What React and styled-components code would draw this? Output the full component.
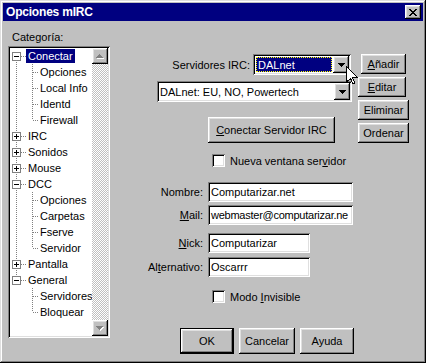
import React from "react";
import styled, { createGlobalStyle, css } from "styled-components";

const GlobalStyle = createGlobalStyle`
  html, body {
    margin: 0;
    padding: 0;
    background: #c0c0c0;
  }
`;

const raised = css`
  box-shadow: inset -1px -1px #000, inset 1px 1px #fff, inset -2px -2px #808080,
    inset 2px 2px #dfdfdf;
`;

const sunken = css`
  box-shadow: inset 1px 1px #808080, inset -1px -1px #fff, inset 2px 2px #000,
    inset -2px -2px #dfdfdf;
`;

const Window = styled.div`
  position: relative;
  width: 426px;
  height: 363px;
  box-sizing: border-box;
  padding: 3px;
  background: #c0c0c0;
  box-shadow: inset -1px -1px #000, inset 1px 1px #dfdfdf, inset -2px -2px #808080,
    inset 2px 2px #fff;
  display: flex;
  flex-direction: column;
  font: 11px "Liberation Sans", Arial, sans-serif;
  color: #000;
`;

const TitleBar = styled.div`
  height: 18px;
  flex-shrink: 0;
  background: #000080;
  display: flex;
  align-items: center;
  justify-content: space-between;
  padding: 0 2px 0 3px;
`;

const Title = styled.span`
  color: #fff;
  font-weight: bold;
  font-size: 12px;
  letter-spacing: -0.2px;
`;

const CloseButton = styled.div`
  width: 16px;
  height: 14px;
  background: #c0c0c0;
  display: flex;
  align-items: center;
  justify-content: center;
  ${raised};
`;

const Body = styled.div`
  flex: 1;
  display: flex;
  padding: 9px 0 0 5px;
`;

const CategoryPane = styled.div`
  width: 102px;
  display: flex;
  flex-direction: column;
`;

const PaneLabel = styled.div`
  height: 14px;
  line-height: 14px;
  margin-left: 4px;
`;

const TreeBox = styled.div`
  margin-top: 2px;
  height: 292px;
  box-sizing: border-box;
  padding: 2px;
  display: flex;
  background: #fff;
  ${sunken};
`;

const TreeList = styled.div`
  flex: 1;
  overflow: hidden;
  background: #fff;
`;

const TreeRow = styled.div`
  height: 16px;
  display: flex;
  align-items: center;
`;

const dotsV = "repeating-linear-gradient(to bottom, #808080 0 1px, transparent 1px 2px)";
const dotsH = "repeating-linear-gradient(to right, #808080 0 1px, transparent 1px 2px)";

const guideLayers = ({ $up, $down, $across }) => {
  const layers = [];
  if ($up) layers.push(`${dotsV} 6px 0 / 1px 8px no-repeat`);
  if ($down) layers.push(`${dotsV} 6px 8px / 1px 8px no-repeat`);
  if ($across) layers.push(`${dotsH} 7px 8px / ${$across}px 1px no-repeat`);
  return layers.length ? `background: ${layers.join(", ")};` : "";
};

const Guide = styled.span`
  width: ${(p) => p.$w}px;
  height: 16px;
  flex-shrink: 0;
  display: flex;
  align-items: center;
  ${guideLayers};

  svg {
    margin-left: 2px;
    display: block;
  }
`;

const TreeLabel = styled.span`
  height: 14px;
  line-height: 14px;
  padding: 0 2px;
  white-space: nowrap;
  background: ${(p) => (p.$selected ? "#000080" : "transparent")};
  color: ${(p) => (p.$selected ? "#fff" : "#000")};
`;

const ScrollBar = styled.div`
  width: 16px;
  display: flex;
  flex-direction: column;
`;

const ScrollButton = styled.div`
  width: 16px;
  height: 16px;
  flex-shrink: 0;
  background: #c0c0c0;
  ${raised};

  svg {
    display: block;
  }
`;

const ScrollTrack = styled.div`
  flex: 1;
  background: repeating-conic-gradient(#c0c0c0 0 25%, #fff 0 50%) 0 0 / 2px 2px;
`;

const SettingsPane = styled.div`
  flex: 1;
  display: flex;
  flex-direction: column;
  padding-top: 24px;
`;

const ServerArea = styled.div`
  display: flex;
`;

const ServerMain = styled.div`
  width: 248px;
  display: flex;
  flex-direction: column;
`;

const SideButtons = styled.div`
  display: flex;
  flex-direction: column;
  gap: 3px;
`;

const FieldRow = styled.div`
  display: flex;
  align-items: center;
  margin-top: ${(p) => p.$top || 0}px;
`;

const FieldLabel = styled.label`
  width: ${(p) => p.$w}px;
  margin-right: ${(p) => p.$gap}px;
  text-align: right;
  white-space: nowrap;
`;

const Combo = styled.div`
  box-sizing: border-box;
  width: ${(p) => p.$w}px;
  height: 21px;
  margin-left: ${(p) => p.$indent || 0}px;
  margin-top: ${(p) => p.$top || 0}px;
  padding: 2px;
  display: flex;
  background: #fff;
  ${sunken};
`;

const ComboValue = styled.div`
  flex: 1;
  display: flex;
  align-items: center;
  padding: ${(p) => (p.$focused ? "1px" : "0 0 0 1px")};
  white-space: nowrap;
  overflow: hidden;
`;

const Highlight = styled.div`
  flex: 1;
  align-self: stretch;
  display: flex;
  align-items: center;
  box-sizing: border-box;
  padding-left: 1px;
  background: #000080;
  color: #fff;
  border: 1px dotted #ffff00;
`;

const DropButton = styled.div`
  width: 16px;
  height: 17px;
  flex-shrink: 0;
  background: #c0c0c0;
  display: flex;
  align-items: center;
  justify-content: center;
  ${raised};
`;

const Button = styled.button`
  box-sizing: border-box;
  width: ${(p) => p.$w}px;
  height: ${(p) => p.$h || 20}px;
  margin-left: ${(p) => p.$indent || 0}px;
  margin-top: ${(p) => p.$top || 0}px;
  padding: 0;
  border: ${(p) => (p.$default ? "1px solid #000" : "none")};
  background: #c0c0c0;
  font: inherit;
  color: #000;
  white-space: nowrap;
  ${raised};
`;

const CheckRow = styled.label`
  display: flex;
  align-items: center;
  gap: 5px;
  margin-left: 102px;
  margin-top: ${(p) => p.$top}px;
  height: 13px;
`;

const CheckBox = styled.span`
  width: 13px;
  height: 13px;
  box-sizing: border-box;
  background: #fff;
  flex-shrink: 0;
  ${sunken};
`;

const TextField = styled.div`
  box-sizing: border-box;
  width: ${(p) => p.$w}px;
  height: 20px;
  padding: 2px 2px 2px 3px;
  display: flex;
  align-items: center;
  background: #fff;
  white-space: nowrap;
  overflow: hidden;
  letter-spacing: ${(p) => (p.$tight ? "-0.25px" : "normal")};
  ${sunken};
`;

const DialogButtons = styled.div`
  display: flex;
  gap: 5px;
  margin: 25px 0 0 70px;
`;

const Pointer = styled.svg`
  position: absolute;
  left: 346px;
  top: 66px;
`;

const triangleRows = (x, y, up, color) =>
  [0, 1, 2, 3].map((r) => {
    const row = up ? r : 3 - r;
    return <rect key={`${color}${r}`} x={x + 3 - row} y={y + r} width={row * 2 + 1} height={1} fill={color} />;
  });

const Arrow = ({ up, disabled }) => (
  <svg width="16" height="16" viewBox="0 0 16 16" shapeRendering="crispEdges">
    {disabled && triangleRows(5, 7, up, "#fff")}
    {triangleRows(4, 6, up, disabled ? "#808080" : "#000")}
  </svg>
);

const DropArrow = () => (
  <svg width="7" height="4" viewBox="0 0 7 4" shapeRendering="crispEdges">
    {triangleRows(0, 0, false, "#000")}
  </svg>
);

const closeCells = [
  [0, 0], [1, 0], [6, 0], [7, 0],
  [1, 1], [2, 1], [5, 1], [6, 1],
  [2, 2], [3, 2], [4, 2], [5, 2],
  [3, 3], [4, 3],
  [2, 4], [3, 4], [4, 4], [5, 4],
  [1, 5], [2, 5], [5, 5], [6, 5],
  [0, 6], [1, 6], [6, 6], [7, 6],
];

const CloseGlyph = () => (
  <svg width="8" height="7" viewBox="0 0 8 7" shapeRendering="crispEdges">
    {closeCells.map(([x, y]) => (
      <rect key={`${x}-${y}`} x={x} y={y} width="1" height="1" fill="#000" />
    ))}
  </svg>
);

const Expander = ({ open }) => (
  <svg width="9" height="9" viewBox="0 0 9 9" shapeRendering="crispEdges">
    <rect x="0.5" y="0.5" width="8" height="8" fill="#fff" stroke="#808080" />
    <rect x="2" y="4" width="5" height="1" fill="#000" />
    {!open && <rect x="4" y="2" width="1" height="5" fill="#000" />}
  </svg>
);

const TREE = [
  { label: "Conectar", node: "open", selected: true },
  { label: "Opciones", child: true },
  { label: "Local Info", child: true },
  { label: "Identd", child: true },
  { label: "Firewall", child: true, last: true },
  { label: "IRC", node: "closed" },
  { label: "Sonidos", node: "closed" },
  { label: "Mouse", node: "closed" },
  { label: "DCC", node: "open" },
  { label: "Opciones", child: true },
  { label: "Carpetas", child: true },
  { label: "Fserve", child: true },
  { label: "Servidor", child: true, last: true },
  { label: "Pantalla", node: "closed" },
  { label: "General", node: "open", last: true },
  { label: "Servidores", child: true, underLast: true },
  { label: "Bloquear", child: true, last: true, underLast: true },
];

const TreeItem = ({ item, first }) =>
  item.child ? (
    <TreeRow>
      <Guide $w={16} $up={!item.underLast} $down={!item.underLast} />
      <Guide $w={12} $up $down={!item.last} $across={5} />
      <TreeLabel>{item.label}</TreeLabel>
    </TreeRow>
  ) : (
    <TreeRow>
      <Guide $w={16} $up={!first} $down={!item.last} $across={9}>
        <Expander open={item.node === "open"} />
      </Guide>
      <TreeLabel $selected={item.selected}>{item.label}</TreeLabel>
    </TreeRow>
  );

const App = () => (
  <>
    <GlobalStyle />
    <Window>
      <TitleBar>
        <Title>Opciones mIRC</Title>
        <CloseButton>
          <CloseGlyph />
        </CloseButton>
      </TitleBar>
      <Body>
        <CategoryPane>
          <PaneLabel>Categoría:</PaneLabel>
          <TreeBox>
            <TreeList>
              {TREE.map((item, i) => (
                <TreeItem key={i} item={item} first={i === 0} />
              ))}
            </TreeList>
            <ScrollBar>
              <ScrollButton>
                <Arrow up disabled />
              </ScrollButton>
              <ScrollTrack />
              <ScrollButton>
                <Arrow disabled />
              </ScrollButton>
            </ScrollBar>
          </TreeBox>
        </CategoryPane>

        <SettingsPane>
          <ServerArea>
            <ServerMain>
              <FieldRow>
                <FieldLabel $w={140} $gap={3}>Servidores IRC:</FieldLabel>
                <Combo $w={98}>
                  <ComboValue $focused>
                    <Highlight>DALnet</Highlight>
                  </ComboValue>
                  <DropButton>
                    <DropArrow />
                  </DropButton>
                </Combo>
              </FieldRow>
              <Combo $w={195} $indent={47} $top={6}>
                <ComboValue>DALnet: EU, NO, Powertech</ComboValue>
                <DropButton>
                  <DropArrow />
                </DropButton>
              </Combo>
              <Button $w={127} $h={26} $indent={98} $top={15}>
                <u>C</u>onectar Servidor IRC
              </Button>
              <CheckRow $top={11}>
                <CheckBox />
                <span>
                  Nueva ventana ser<u>v</u>idor
                </span>
              </CheckRow>
            </ServerMain>
            <SideButtons>
              <Button $w={45} $indent={3}>
                <u>A</u>ñadir
              </Button>
              <Button $w={48}>
                <u>E</u>ditar
              </Button>
              <Button $w={51}>Eliminar</Button>
              <Button $w={51}>Ordenar</Button>
            </SideButtons>
          </ServerArea>

          <FieldRow $top={15}>
            <FieldLabel $w={93} $gap={5}>Nombre:</FieldLabel>
            <TextField $w={145}>Computarizar.net</TextField>
          </FieldRow>
          <FieldRow $top={3}>
            <FieldLabel $w={93} $gap={5}>
              <u>M</u>ail:
            </FieldLabel>
            <TextField $w={145} $tight>
              webmaster@computarizar.ne
            </TextField>
          </FieldRow>
          <FieldRow $top={8}>
            <FieldLabel $w={93} $gap={5}>
              <u>N</u>ick:
            </FieldLabel>
            <TextField $w={102}>Computarizar</TextField>
          </FieldRow>
          <FieldRow $top={4}>
            <FieldLabel $w={93} $gap={5}>
              Al<u>t</u>ernativo:
            </FieldLabel>
            <TextField $w={102}>Oscarrr</TextField>
          </FieldRow>
          <CheckRow $top={13}>
            <CheckBox />
            <span>
              Modo <u>I</u>nvisible
            </span>
          </CheckRow>

          <DialogButtons>
            <Button $w={54} $h={26} $default>
              OK
            </Button>
            <Button $w={56} $h={26}>
              Cancelar
            </Button>
            <Button $w={54} $h={26}>
              Ayuda
            </Button>
          </DialogButtons>
        </SettingsPane>
      </Body>

      <Pointer width="12" height="19" viewBox="0 0 12 19" shapeRendering="crispEdges">
        <polygon
          points="0.5,0.5 0.5,16 4.5,12.5 7,18 9,17 6.5,11.5 11.5,11.5"
          fill="#fff"
          stroke="#000"
          strokeWidth="1"
        />
      </Pointer>
    </Window>
  </>
);

export default App;
